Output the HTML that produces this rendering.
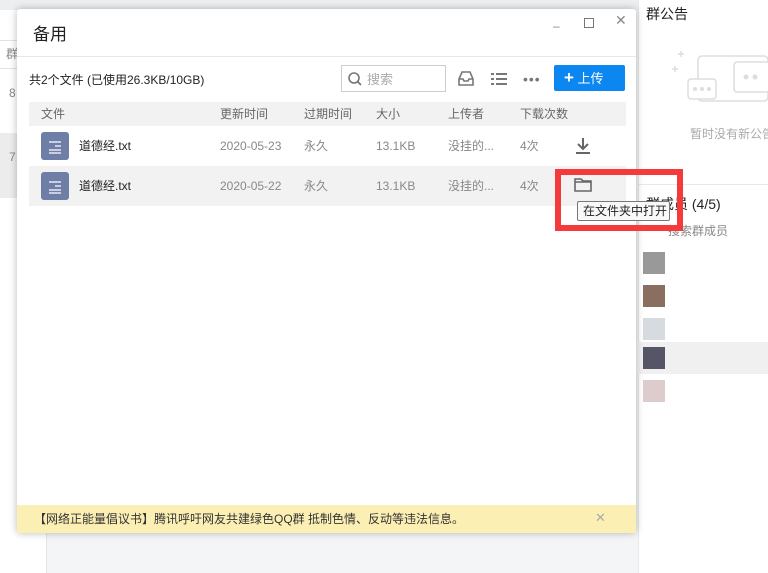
<!DOCTYPE html>
<html><head><meta charset="utf-8"><style>
*{margin:0;padding:0;box-sizing:border-box}
body{width:768px;height:573px;overflow:hidden;position:relative;background:#f4f5f7;font-family:"Liberation Sans","Noto Sans CJK SC",sans-serif;font-size:12px;color:#222}
.abs{position:absolute}
.dlg{left:17px;top:9px;width:619px;height:524px;background:#fff;box-shadow:0 0 8px rgba(0,0,0,.28);border-radius:3px}
.hdr{left:12px;top:93px;width:597px;height:24px;background:#f2f2f2;color:#666}
.hdr span{line-height:24px;top:0}
.row{left:12px;width:597px;height:40px}
.row span{line-height:40px;top:0;white-space:nowrap}
.gray{color:#888}
.ic{width:28px;height:28px;background:#6f7ea6;border-radius:3px;top:6px;left:12px}
</style></head><body>
<div class="abs" style="left:0;top:0;width:640px;height:10px;background:#eceef0"></div>
<div class="abs" style="left:0;top:10px;width:47px;height:563px;background:#fff;border-right:1px solid #e5e5e5"></div>
<div class="abs" style="left:0;top:40px;width:47px;height:1px;background:#e2e2e2"></div>
<div class="abs" style="left:6px;top:45px;color:#888">群</div>
<div class="abs" style="left:0;top:68px;width:47px;height:1px;background:#e2e2e2"></div>
<div class="abs" style="left:9px;top:86px;color:#888">8</div>
<div class="abs" style="left:0;top:133px;width:47px;height:65px;background:#ececec"></div>
<div class="abs" style="left:9px;top:150px;color:#888">7</div>
<div class="abs" style="left:638px;top:0;width:130px;height:573px;background:#fff;border-left:1px solid #e8e8e8"></div>
<div class="abs" style="left:646px;top:4px;font-size:14px">群公告</div>
<svg class="abs" style="left:672px;top:44px" width="100" height="70"><g fill="none" stroke="#ddd" stroke-width="1.5"><path d="M6 10h6M9 7v6M0 25h6M3 22v6"/><rect x="26" y="12" width="70" height="45" rx="4"/><rect x="16" y="35" width="28" height="20" rx="3" fill="#fff"/><rect x="62" y="18" width="36" height="30" rx="3" fill="#fff"/></g><g fill="#ddd"><circle cx="23" cy="45" r="2"/><circle cx="30" cy="45" r="2"/><circle cx="37" cy="45" r="2"/><circle cx="74" cy="33" r="2.5"/><circle cx="83" cy="33" r="2.5"/></g></svg>
<div class="abs" style="left:690px;top:125px;color:#aaa;white-space:nowrap">暂时没有新公告</div>
<div class="abs" style="left:638px;top:184px;width:130px;height:1px;background:#e8e8e8"></div>
<div class="abs" style="left:646px;top:194px;font-size:14px;white-space:nowrap">群成员 (4/5)</div>
<div class="abs" style="left:668px;top:222px;color:#888">搜索群成员</div>
<div class="abs" style="left:643px;top:252px;width:22px;height:22px;background:#999"></div>
<div class="abs" style="left:643px;top:285px;width:22px;height:22px;background:#8a6e60"></div>
<div class="abs" style="left:643px;top:318px;width:22px;height:22px;background:#d6dbe0"></div>
<div class="abs" style="left:638px;top:342px;width:130px;height:32px;background:#f0f0f0"></div>
<div class="abs" style="left:643px;top:347px;width:22px;height:22px;background:#556"></div>
<div class="abs" style="left:643px;top:380px;width:22px;height:22px;background:#dcc"></div>

<div class="abs dlg">
 <div class="abs" style="left:16px;top:11px;font-size:17px">备用</div>
 <div class="abs" style="left:536px;top:10px;color:#888;font-size:12px">–</div>
 <div class="abs" style="left:567px;top:7px;width:10px;height:10px;border:1px solid #777;margin-top:2px"></div>
 <div class="abs" style="left:598px;top:3px;color:#888;font-size:14px">✕</div>
 <div class="abs" style="left:0;top:47px;width:619px;height:1px;background:#e8e8e8"></div>
 <div class="abs" style="left:12px;top:62px">共2个文件 (已使用26.3KB/10GB)</div>
 <div class="abs" style="left:324px;top:56px;width:105px;height:27px;border:1px solid #ccc"></div>
 <svg class="abs" style="left:331px;top:63px" width="14" height="14"><circle cx="6" cy="6" r="5" fill="none" stroke="#777" stroke-width="1.6"/><path d="M9.5 9.5l3.5 3.5" stroke="#777" stroke-width="1.8"/></svg>
 <div class="abs" style="left:350px;top:60px;color:#aaa;font-size:13px">搜索</div>
 <svg class="abs" style="left:440px;top:61px" width="18" height="18"><path d="M2 9l3-7h8l3 7v6H2z M2 9h4l1 2h4l1-2h4" fill="none" stroke="#777" stroke-width="1.6"/></svg>
 <svg class="abs" style="left:474px;top:62px" width="16" height="16"><g fill="#777"><rect x="0" y="2" width="3" height="2"/><rect x="5" y="2" width="11" height="2"/><rect x="0" y="7" width="3" height="2"/><rect x="5" y="7" width="11" height="2"/><rect x="0" y="12" width="3" height="2"/><rect x="5" y="12" width="11" height="2"/></g></svg>
 <div class="abs" style="left:506px;top:62px;color:#777;font-size:14px;letter-spacing:1px">•••</div>
 <div class="abs" style="left:537px;top:56px;width:71px;height:26px;background:#0c87f2;border-radius:2px;color:#fff;font-size:13px;line-height:26px;padding-left:10px"><b style="font-size:17px">+</b> 上传</div>
 <div class="abs hdr"><span class="abs" style="left:12px">文件</span><span class="abs" style="left:191px">更新时间</span><span class="abs" style="left:275px">过期时间</span><span class="abs" style="left:347px">大小</span><span class="abs" style="left:419px">上传者</span><span class="abs" style="left:491px">下载次数</span></div>
 <div class="abs row" style="top:117px"><div class="abs ic"><svg width="28" height="28"><path d="M8 10h12M14 14h6M8 18h12M8 21h12" stroke="#fff" stroke-width="1.3"/></svg></div><span class="abs" style="left:50px">道德经.txt</span><span class="abs gray" style="left:191px">2020-05-23</span><span class="abs gray" style="left:275px">永久</span><span class="abs gray" style="left:347px">13.1KB</span><span class="abs gray" style="left:419px">没挂的...</span><span class="abs gray" style="left:491px">4次</span>
 <svg class="abs" style="left:545px;top:11px" width="18" height="18"><path d="M9 1v10M4 7l5 5 5-5M2 16h14" fill="none" stroke="#666" stroke-width="2"/></svg></div>
 <div class="abs row" style="top:157px;background:#f2f2f2"><div class="abs ic"><svg width="28" height="28"><path d="M8 10h12M14 14h6M8 18h12M8 21h12" stroke="#fff" stroke-width="1.3"/></svg></div><span class="abs" style="left:50px">道德经.txt</span><span class="abs gray" style="left:191px">2020-05-22</span><span class="abs gray" style="left:275px">永久</span><span class="abs gray" style="left:347px">13.1KB</span><span class="abs gray" style="left:419px">没挂的...</span><span class="abs gray" style="left:491px">4次</span>
 <svg class="abs" style="left:545px;top:11px" width="18" height="16"><path d="M1 2h6l2 2h8v10H1z M1 5h16" fill="none" stroke="#666" stroke-width="1.6"/></svg></div>
 <div class="abs" style="left:0;top:496px;width:619px;height:28px;background:#fcefb4;color:#333;padding:5px 0 0 17px;font-size:12px">【网络正能量倡议书】腾讯呼吁网友共建绿色QQ群 抵制色情、反动等违法信息。<span class="abs" style="left:578px;top:5px;color:#aaa;font-size:13px">✕</span></div>
</div>
<div class="abs" style="left:577px;top:201px;width:93px;height:20px;background:#f8f8f8;border:1px solid #777;border-radius:2px;font-size:12px;line-height:18px;padding-left:5px;white-space:nowrap">在文件夹中打开</div>
<div class="abs" style="left:555px;top:169px;width:128px;height:62px;border:6px solid #f43a3a"></div>
</body></html>
